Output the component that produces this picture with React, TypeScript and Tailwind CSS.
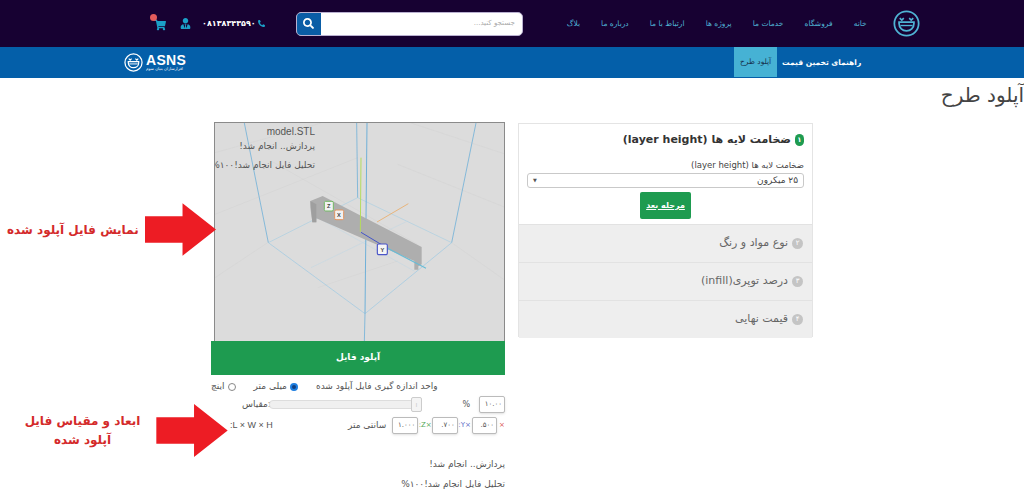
import React from "react";
import { FaPhoneAlt, FaUserTie, FaShoppingCart, FaSearch } from "react-icons/fa";

const FA = "font-['DejaVu_Sans','Noto_Sans',sans-serif]";

function Logo({ size, color }: { size: number; color: string }) {
  return (
    <svg width={size} height={size} viewBox="0 0 40 40" fill="none" stroke={color} strokeWidth="2.6">
      <circle cx="20" cy="20" r="18" />
      <path d="M10 12 l3 3 l3 -3 M24 12 l3 3 l3 -3" strokeWidth="2.4" />
      <path d="M9 18 H31 V20 C31 27 26 31 20 31 C14 31 9 27 9 20 Z" />
      <path d="M11 23 H29" strokeWidth="2" />
    </svg>
  );
}

function Arrow({ w, h }: { w: number; h: number }) {
  return (
    <svg width={w} height={h} viewBox="0 0 70 52">
      <polygon points="0,13 37,13 37,0 70,26 37,52 37,39 0,39" fill="#ed1c24" />
    </svg>
  );
}

function NavLink({ label }: { label: string }) {
  return <span className="text-[7.5px] text-[#4fb3d4] whitespace-nowrap">{label}</span>;
}

function Step({ n, label }: { n: string; label: string }) {
  return (
    <div className="h-[38px] bg-[#eeeeee] border-t border-[#e2e2e2] flex items-center justify-start gap-1 px-[9px] text-[#666]" dir="rtl">
      <span className="w-[11px] h-[11px] rounded-full bg-[#c4c4c4] text-white text-[7px] flex items-center justify-center">{n}</span>
      <span className="text-[11px]">{label}</span>
    </div>
  );
}

function NumBox({ value, w = "w-[26px]" }: { value: string; w?: string }) {
  return (
    <span className={`${w} h-[17px] border border-[#bbb] rounded-[2px] bg-white shadow-sm text-[7px] text-[#555] flex items-center justify-end pr-[2px] tracking-wide`}>
      {value}
    </span>
  );
}

function Viewer() {
  return (
    <div className="relative ml-[3px] w-[291px] h-[219px] bg-[#dcdcdc] border-l border-t border-r border-[#8a8a8a] overflow-hidden">
      <svg width="291" height="219" viewBox="12 6 873 657" fill="none">
        <g stroke="#d2d2d2" strokeWidth="1.5">
          <path d="M12 95 L330 6 M12 280 L440 110 M600 6 L885 100 M560 130 L885 260 M170 365 L12 470 M722 365 L885 480 M320 500 L560 420 M180 120 L620 370" />
        </g>
        <g stroke="#a9cfe2" strokeWidth="2">
          <path d="M172 365 L440 230 L722 365" />
          <path d="M300 440 L590 300" stroke="#c5d8e2" />
          <path d="M320 290 L610 450" stroke="#c5d8e2" />
        </g>
        <g stroke="#6fb0d8" strokeWidth="2.4">
          <path d="M100 6 L172 365 M795 6 L722 365 M437 6 L440 230" />
          <path d="M172 365 L462 578 L722 365" stroke="#a4cbe2" />
          <path d="M468 6 L462 578" strokeWidth="3" />
          <path d="M462 578 L460 663" />
        </g>
        <path d="M298 240 L335 225 L632 378 L632 430 L622 436 L622 446 L610 446 L610 420 L316 292 L316 304 L304 304 L298 260 Z" fill="#aeaeae" />
        <path d="M298 240 L316 250 L316 304 L304 304 Z" fill="#9f9f9f" />
        <path d="M450 110 L448 332" stroke="#b5dc5c" strokeWidth="3" />
        <path d="M498 303 L592 248" stroke="#e8b57c" strokeWidth="3" />
        <path d="M450 334 L530 382" stroke="#4255c8" strokeWidth="3" />
        <path d="M530 382 L645 442" stroke="#68bcd6" strokeWidth="3.5" />
        <g fontFamily="'Liberation Sans', sans-serif" fontSize="17" fontWeight="700" textAnchor="middle">
          <rect x="340" y="241" width="27" height="29" rx="4" fill="#f2f2f2" stroke="#73b964" strokeWidth="3" />
          <text x="353" y="262" fill="#444">Z</text>
          <rect x="371" y="267" width="27" height="29" rx="4" fill="#f2f2f2" stroke="#e29561" strokeWidth="3" />
          <text x="384" y="288" fill="#444">X</text>
          <rect x="499" y="369" width="30" height="32" rx="4" fill="#f5f5f5" stroke="#4a55c8" strokeWidth="3.5" />
          <text x="514" y="392" fill="#444">Y</text>
        </g>
      </svg>
      <div className="absolute top-0 left-0 w-[100px] flex flex-col items-end text-[9px] text-[#555] leading-none" dir="ltr">
        <span className="mt-[4px] font-['Liberation_Sans',sans-serif] text-[10px]">model.STL</span>
        <span className="mt-[5px] whitespace-nowrap" dir="rtl">پردازش.. انجام شد!</span>
        <span className="mt-[10px] whitespace-nowrap" dir="rtl">تحلیل فایل انجام شد!۱۰۰%</span>
      </div>
    </div>
  );
}

function CenterColumn() {
  return (
    <div className="w-[294px] shrink-0">
      <Viewer />
      <button className="w-[294px] h-[34px] bg-[#1e9b50] text-white text-[9px] font-bold flex items-center justify-center">آپلود فایل</button>
      <div className="flex justify-end items-center gap-[18px] mt-[6px] h-[12px] text-[9px] text-[#555] whitespace-nowrap" dir="rtl">
        <span>واحد اندازه گیری فایل آپلود شده</span>
        <span className="flex items-center gap-[3px] mr-0"><span className="w-[8px] h-[8px] rounded-full border-[2px] border-[#1f7fe0] bg-[#123f80]" />میلی متر</span>
        <span className="flex items-center gap-[3px]"><span className="w-[8px] h-[8px] rounded-full border border-[#888] bg-white" />اینچ</span>
      </div>
      <div className="flex items-center h-[17px] mt-[3px] pl-[31px]" dir="ltr">
        <span className="text-[9px] text-[#555] whitespace-nowrap w-[27px]">مقیاس:</span>
        <div className="relative w-[152px] h-[9px] bg-[#f0f0f0] border border-[#ddd] rounded-[4px]">
          <span className="absolute left-[141px] top-[-4px] w-[11px] h-[15px] bg-[#f4f4f4] border border-[#ccc] rounded-[2px] text-[6px] text-[#bbb] flex items-center justify-center">⁞</span>
        </div>
        <span className="ml-[45px] text-[8px] text-[#555]">%</span>
        <span className="ml-[9px]"><NumBox value="۱۰.۰۰" /></span>
      </div>
      <div className="flex items-center h-[17px] mt-[4px] pl-[19px] text-[9px] whitespace-nowrap" dir="ltr">
        <span className="w-[120px] text-[9px] text-[#555] font-['Liberation_Sans',sans-serif]">:L × W × H</span>
        <span className="text-[#555]">سانتی متر</span>
        <span className="ml-[6px]"><NumBox value="۱.۰۰۰" /></span>
        <span className="w-[14px] text-[#55a955] text-[7px] text-center">:Z×</span>
        <NumBox value=".۷۰۰" />
        <span className="w-[14px] text-[#5c6bc8] text-[7px] text-center">:Y×</span>
        <NumBox value=".۵۰۰" />
        <span className="w-[8px] text-[#d9534f] text-[7px] text-right">×</span>
      </div>
      <p className="mt-[24px] text-right text-[9px] text-[#555]" dir="rtl">پردازش.. انجام شد!</p>
      <p className="mt-[6px] text-right text-[9px] text-[#555]" dir="rtl">تحلیل فایل انجام شد!۱۰۰%</p>
    </div>
  );
}

function StepsPanel() {
  return (
    <div className="w-[295px] h-[214px] mt-[1px] ml-[13px] border border-[#e4e4e4] bg-white self-start" dir="rtl">
      <div className="h-[100px] px-[8px] pt-[8px]">
        <div className="flex items-center gap-1 text-[11px] font-bold text-[#333]">
          <span className="w-[9px] h-[12px] rounded-full bg-[#1e9b50] text-white text-[7px] flex items-center justify-center">۱</span>
          ضخامت لایه ها (layer height)
        </div>
        <div className="mt-[10px] text-[8.5px] text-[#444]">ضخامت لایه ها (layer height)</div>
        <div className="mt-[2px] h-[15px] border border-[#c9c9c9] rounded-[3px] flex items-center justify-between px-[5px] text-[9px] text-[#444]">
          <span>۲۵ میکرون</span>
          <span className="text-[5px] text-[#555]">▼</span>
        </div>
        <div className="flex justify-center mt-[4px]">
          <span className="w-[51px] h-[27px] bg-[#1e9b50] rounded-[2px] text-white text-[8px] font-bold underline flex items-center justify-center">مرحله بعد</span>
        </div>
      </div>
      <Step n="۲" label="نوع مواد و رنگ" />
      <Step n="۳" label="درصد توپری(infill)" />
      <Step n="۴" label="قیمت نهایی" />
    </div>
  );
}

export default function App() {
  return (
    <div className={`relative w-[1024px] h-[495px] overflow-hidden bg-white ${FA}`}>
      <header className="h-[47px] bg-[#170132] flex items-center pl-[150px]" dir="ltr">
        <span className="relative text-[#1ba0c8] text-[12px] mt-[3px] ml-[4px]">
          <FaShoppingCart />
          <span className="absolute -top-[5px] -left-[4px] w-[7px] h-[7px] rounded-full bg-[#e25b5b]" />
        </span>
        <FaUserTie className="ml-[14px] text-[#1ba0c8] text-[11px]" />
        <span className="ml-[11px] text-[8px] font-bold text-white tracking-[0.3px]">۰۸۱۳۸۳۴۳۵۹۰</span>
        <FaPhoneAlt className="ml-[2px] text-[#1ba0c8] text-[7px]" />
        <div className="ml-[31px] w-[227px] h-[24px] bg-white rounded-[5px] border border-[#b9b0d0] flex items-center overflow-hidden">
          <span className="w-[24px] h-full bg-[#0a5da6] flex items-center justify-center text-white text-[11px]"><FaSearch /></span>
          <span className="flex-1 text-right pr-[7px] text-[7px] text-[#aaa]" dir="rtl">جستجو کنید...</span>
        </div>
        <nav className="ml-[44px] w-[300px] flex items-center justify-between">
          <NavLink label="بلاگ" />
          <NavLink label="درباره ما" />
          <NavLink label="ارتباط با ما" />
          <NavLink label="پروژه ها" />
          <NavLink label="خدمات ما" />
          <NavLink label="فروشگاه" />
          <NavLink label="خانه" />
        </nav>
        <span className="ml-[26px]"><Logo size={27} color="#4fb3d4" /></span>
      </header>
      <div className="h-[31px] bg-[#045fa9] flex items-stretch pl-[124px]" dir="ltr">
        <div className="flex items-center gap-[3px]">
          <Logo size={19} color="#ffffff" />
          <div className="flex flex-col items-start leading-none text-white">
            <span className="text-[14px] font-bold font-['Liberation_Sans',sans-serif] leading-[11px] tracking-[0.3px]">ASNS</span>
            <span className="text-[4px] mt-[1px]" dir="rtl">افزارسازان بنیان سوم</span>
          </div>
        </div>
        <div className="ml-[548px] w-[43px] bg-[#46b2d4] text-[#17324f] text-[7.5px] flex items-center justify-center mb-[1px] whitespace-nowrap">آپلود طرح</div>
        <div className="ml-[5px] text-white font-bold text-[7.5px] flex items-center whitespace-nowrap">راهنمای تخمین قیمت</div>
      </div>
      <h1 className="h-[44px] pt-[4px] text-right text-[20px] leading-[26px] text-[#444]" dir="rtl">آپلود طرح</h1>
      <main className="flex pl-[211px]" dir="ltr">
        <CenterColumn />
        <StepsPanel />
      </main>
      <div className="absolute left-[7px] top-[203px] flex items-center gap-[6px] text-[#d42a2a] font-bold text-[12px] whitespace-nowrap">
        <span dir="rtl">نمایش فایل آپلود شده</span>
        <Arrow w={71} h={53} />
      </div>
      <div className="absolute left-[14px] top-[404px] flex items-center gap-[5px] text-[#d42a2a] font-bold text-[12px]">
        <span className="w-[137px] text-center leading-[19px]" dir="rtl">ابعاد و مقیاس فایل آپلود شده</span>
        <Arrow w={72} h={53} />
      </div>
    </div>
  );
}
